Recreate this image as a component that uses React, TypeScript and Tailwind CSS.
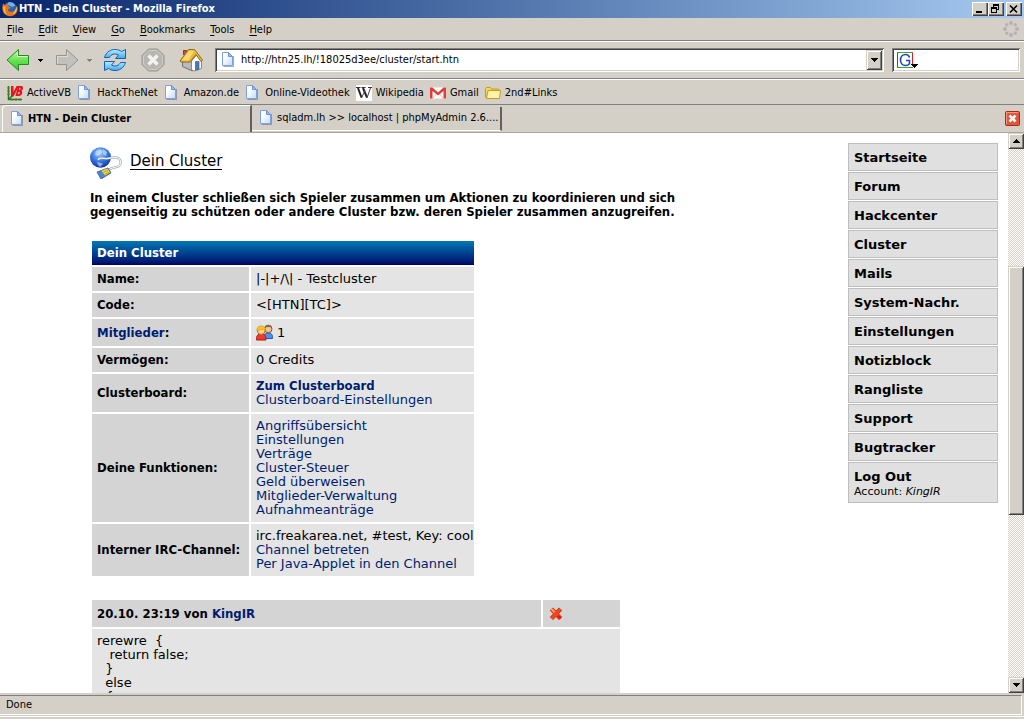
import React from "react";

const raised =
  "bg-[#d4d0c8] shadow-[inset_1px_1px_0_#d4d0c8,inset_-1px_-1px_0_#404040,inset_2px_2px_0_#fff,inset_-2px_-2px_0_#808080]";
const caption =
  "bg-[#d4d0c8] shadow-[inset_1px_1px_0_#fff,inset_-1px_-1px_0_#404040,inset_-2px_-2px_0_#808080]";
const sunken =
  "bg-white shadow-[inset_1px_1px_0_#808080,inset_-1px_-1px_0_#fff,inset_2px_2px_0_#404040,inset_-2px_-2px_0_#d4d0c8]";

function Triangle({ up = false }: { up?: boolean }) {
  return (
    <svg width="7" height="4" viewBox="0 0 7 4" shapeRendering="crispEdges" className="shrink-0">
      <path d={up ? "M3 0h1v1h1v1h1v1h1v1H0V3h1V2h1V1h1z" : "M0 0h7v1H6v1H5v1H4v1H3V3H2V2H1V1H0z"} />
    </svg>
  );
}

function SmallTriangle({ light = false }: { light?: boolean }) {
  return (
    <svg width="5" height="3" viewBox="0 0 5 3" shapeRendering="crispEdges" className="shrink-0">
      <path d="M0 0h5v1H4v1H3v1H2V2H1V1H0z" fill={light ? "#808080" : "#000"} />
    </svg>
  );
}

function PageIcon() {
  return (
    <svg width="16" height="16" viewBox="1 1 16 16" className="shrink-0">
      <defs>
        <linearGradient id="page" x1="0" y1="0" x2="1" y2="1">
          <stop offset=".3" stopColor="#fff" />
          <stop offset="1" stopColor="#c0dcfb" />
        </linearGradient>
      </defs>
      <path d="M3.500 15.500h10V5" fill="none" stroke="#5c6580" strokeOpacity=".55" />
      <path d="M2.500 1.500h6l4 4v9h-10z" fill="url(#page)" stroke="#7da1e6" />
      <path d="M8.500 1.500v4h4z" fill="#9dbcf2" stroke="#6b8fdc" />
    </svg>
  );
}

function FirefoxIcon() {
  return (
    <svg width="16" height="16" viewBox="0 0 16 16" className="shrink-0">
      <circle cx="8" cy="7.500" r="6.500" fill="#2b62b8" />
      <path d="M6 1.500c3-1 6 0 7.500 3L10 6 6 4z" fill="#6fb2ea" />
      <path d="M1.200 2.500C-.5 7 .2 11.500 4 14c4 2.500 9 1 11-3 1-2.500.8-5-.2-7 0 3-1 6-4.300 6.800C7.500 11.500 5.800 9.800 6 8.300l2-.8.6-1.300-2-.7C5.800 4.500 5.500 3 6 2 4.800 2.300 4 3.200 3.700 4 2.800 4 2 3.500 1.200 2.500z" fill="#e8731a" />
      <path d="M1.500 5c-1 4 .5 8 4 9.200C3.500 12 3 9 3.500 6z" fill="#f9b234" />
      <path d="M14.500 5c1 4-1 7.500-4 8.500 2-2 3.500-5 4-8.500z" fill="#fbd65a" />
    </svg>
  );
}

function ArrowIcon({ back = false }: { back?: boolean }) {
  return back ? (
    <svg width="24" height="24" viewBox="0 0 24 24" className="shrink-0">
      <defs>
        <linearGradient id="green" x1="0" y1="0" x2="0" y2="1">
          <stop offset="0" stopColor="#c5f7ae" />
          <stop offset=".55" stopColor="#62e34d" />
          <stop offset="1" stopColor="#3fbf35" />
        </linearGradient>
      </defs>
      <path d="M12.500 1.500v6h10v9h-10v6L1 12z" fill="url(#green)" stroke="#238a25" strokeLinejoin="round" />
      <path d="M11.500 4.500v4h10" fill="none" stroke="#e3fcd8" />
    </svg>
  ) : (
    <svg width="24" height="24" viewBox="0 0 24 24" className="shrink-0">
      <path d="M11.500 1.500v6h-10v9h10v6L23 12z" fill="#c3c1bc" stroke="#96948f" strokeLinejoin="round" />
      <path d="M2.500 15.500v-7h10v-4" fill="none" stroke="#dedcd8" />
    </svg>
  );
}

function ReloadIcon() {
  return (
    <svg width="24" height="24" viewBox="0 0 24 24" className="shrink-0">
      <defs>
        <linearGradient id="blue" x1="0" y1="0" x2="0" y2="1">
          <stop offset="0" stopColor="#b9ecff" />
          <stop offset="1" stopColor="#3fa9ee" />
        </linearGradient>
      </defs>
      <path d="M1.500 9.500C3 4 8 1 13 1.500c2 .2 4 .8 5.500 2l4-2v9h-10L15.500 7C11.500 4.800 8 6.500 6.500 9.500z" fill="url(#blue)" stroke="#1561b6" strokeLinejoin="round" />
      <path d="M22.500 14.500C21 20 16 23 11 22.500c-2-.2-4-.8-5.500-2l-4 2v-9h10L8.500 17c4 2.200 7.500.5 9-2.500z" fill="url(#blue)" stroke="#1561b6" strokeLinejoin="round" />
    </svg>
  );
}

function StopIcon() {
  return (
    <svg width="24" height="24" viewBox="0 0 24 24" className="shrink-0">
      <path d="M7.500 1h9L23 7.500v9L16.500 23h-9L1 16.500v-9z" fill="#b8b6b2" stroke="#979591" />
      <path d="M8 2.500h8L21.500 8v8L16 21.500H8L2.500 16V8z" fill="none" stroke="#cfcdc9" />
      <path d="M7.500 7.500l9 9m0-9l-9 9" stroke="#f4f3f1" strokeWidth="3.500" />
    </svg>
  );
}

function HomeIcon() {
  return (
    <svg width="24" height="24" viewBox="0 0 24 24" className="shrink-0">
      <path d="M3.500 12l7-3 3 3v11l-10-4.500z" fill="#b9b9bd" stroke="#6e6e74" />
      <path d="M12.500 13l5-6 5 6v7.500l-7 2.500-3-1z" fill="#fcfcfc" stroke="#88888c" />
      <path d="M16.500 13.500h3.500V21l-3.500 1.200z" fill="#4a78b5" stroke="#264d83" strokeWidth=".6" />
      <path d="M4.500 2.500h3v4h-3z" fill="#d5483b" stroke="#7c3931" />
      <path d="M1 13L9.500 1.500h6L23.500 12 22 13.500 16.800 6.500 11 14H2z" fill="#eebb38" stroke="#8f6a17" strokeLinejoin="round" />
      <path d="M3 12L10 2.700h5L9.500 12.500z" fill="#fada70" />
    </svg>
  );
}

function ThrobberIcon() {
  return (
    <svg width="16" height="16" viewBox="0 0 16 16" className="shrink-0" fill="#b4b3b1">
      <circle cx="8" cy="2" r="2" />
      <circle cx="12.300" cy="3.800" r="1.700" />
      <circle cx="14" cy="8" r="2" />
      <circle cx="12.300" cy="12.200" r="1.700" />
      <circle cx="8" cy="14" r="2" />
      <circle cx="3.700" cy="12.200" r="1.700" />
      <circle cx="2" cy="8" r="2" />
      <circle cx="3.700" cy="3.800" r="1.700" />
    </svg>
  );
}

function VbIcon() {
  return (
    <svg width="16" height="16" viewBox="0 0 16 16" className="shrink-0">
      <path d="M1.500 1v13.500H15M1.500 14.500L6 10" fill="none" stroke="#1d7a1d" strokeWidth="1.500" />
      <path d="M0 3h3M0 6h3M0 9h3M5 13v3M9 13v3M13 13v3" stroke="#7a7a1d" />
      <path d="M4 1h2.500v6L9.500 1H12L6.500 11.500H4z" fill="#e8141c" />
      <path fillRule="evenodd" d="M11 1h3.500c2 0 2 3.500 0 4.800 1.500 1 .8 5.200-2.300 5.200H8.500zm1.300 1.800L12 5c1.800 0 2.300-2.200.3-2.200zM11.400 7L11 9.300c2 0 2.500-2.300.4-2.300z" fill="#e8141c" />
    </svg>
  );
}

function WikipediaIcon() {
  return (
    <svg width="16" height="16" viewBox="0 0 16 16" className="shrink-0">
      <path d="M0 0h16v16H0z" fill="#fff" />
      <path d="M2 3l3.500 9.500" fill="none" stroke="#222" strokeWidth="2" />
      <path d="M7 3l4 9.500" fill="none" stroke="#222" strokeWidth="2" />
      <path d="M5.500 13L9 5.500M11 13l3.500-10" fill="none" stroke="#444" />
      <path d="M0 2.500h4.500M5.500 2.500h4M12 2.500h4" stroke="#333" />
    </svg>
  );
}

function GmailIcon() {
  return (
    <svg width="16" height="16" viewBox="0 0 16 16" className="shrink-0">
      <path d="M0 2.500h16v11H0z" fill="#fff" />
      <path d="M3 13l4-4.500M13 13L9 8.500" stroke="#e8b5b0" />
      <path d="M0 2.500h2.500L8 7.500l5.500-5H16v11h-2.500V6L8 10.500 2.500 6v7.500H0z" fill="#e03c38" />
    </svg>
  );
}

function FolderIcon() {
  return (
    <svg width="16" height="16" viewBox="0 0 16 16" className="shrink-0">
      <path d="M.5 12.500v-9l1-1h4l1 1.500h7l.5.500v8z" fill="#f5d75f" stroke="#c39a20" strokeLinejoin="round" />
      <path d="M1.500 13.500l1.500-8h12.500l-1 8z" fill="#fdf3a8" stroke="#c59a22" strokeLinejoin="round" />
    </svg>
  );
}

function GoogleIcon() {
  return (
    <svg width="21" height="17" viewBox="0 0 21 17" className="shrink-0">
      <path d="M0 0h16v16H0z" fill="#fff" />
      <path d="M0 .5h16M0 15.500h16" stroke="#2faa35" />
      <path d="M.5 1v14" stroke="#2452c4" />
      <path d="M15.500 1v11" stroke="#d62020" />
      <path d="M12.500 5.500C12 3.500 10.500 2.500 8.500 2.500c-3 0-5 2.300-5 5.500s2 5.500 5 5.500c2 0 3.500-.8 4-2V8.500H9" fill="none" stroke="#1f47b8" strokeWidth="1.600" />
      <path d="M14 12h7v1h-1v1h-1v1h-1v1h-1v-1h-1v-1h-1v-1h-1z" fill="#000" shapeRendering="crispEdges" />
    </svg>
  );
}

function GlobeIcon() {
  return (
    <svg width="32" height="32" viewBox="0 0 32 32" className="shrink-0">
      <defs>
        <radialGradient id="globe" cx=".45" cy=".3" r=".75">
          <stop offset="0" stopColor="#a9cdf9" />
          <stop offset=".5" stopColor="#3a7be4" />
          <stop offset="1" stopColor="#0b2a91" />
        </radialGradient>
      </defs>
      <ellipse cx="10.500" cy="10.500" rx="10.500" ry="10.200" fill="url(#globe)" />
      <path d="M6 4l4-2 3 2-2 3-4 2-2-1zM13 2l4 3-1 4-3-2zM7 15l4 1 2 1-3 3-2-2z" fill="#d5e9fd" opacity=".6" />
      <path d="M8 13c1-3 4-2 7-1.500 5 .5 9-2.500 13-.5 4 2.500 3.500 7.500-1 9-3 1-6 .5-8 3" fill="none" stroke="#8f9aa5" strokeWidth="2.200" />
      <path d="M8 13c1-3 4-2 7-1.500 5 .5 9-2.500 13-.5 4 2.500 3.500 7.500-1 9-3 1-6 .5-8 3" fill="none" stroke="#f3f5f8" strokeWidth="1.200" />
      <path d="M7 25l11-4 3 5-10 6z" fill="#4f84d0" stroke="#355a96" strokeWidth=".8" />
      <path d="M11.500 24l6-2.500 2.500 4-5 3z" fill="#f6d733" />
      <path d="M13 25.500l5-2M14.500 27.500l5-2.300" stroke="#b89010" strokeWidth=".8" />
    </svg>
  );
}

function MembersIcon() {
  return (
    <svg width="17" height="17" viewBox="0 0 17 17" className="shrink-0">
      <path d="M8 14.500c0-4 1-5.500 4.500-5.500s4 2 4 5.500z" fill="#4a93ee" stroke="#1d57b4" />
      <circle cx="12.300" cy="5" r="3.700" fill="#f3c390" stroke="#80522c" />
      <path d="M8.500 4c0-4.500 7.500-4.500 7.500 0-2-1.500-5-1.500-7.500 0z" fill="#8b6a4c" />
      <path d="M.5 16c0-4.500 1-6 4.800-6s4.700 2 4.700 6z" fill="#ee3a34" stroke="#b41414" />
      <circle cx="5.200" cy="6.500" r="3.900" fill="#fbd19c" stroke="#b9721f" />
      <path d="M1 6.500C.5.500 9.500.500 9.500 6 7 4 4 6.500 1 6.500z" fill="#fbc91c" stroke="#c98b0f" strokeWidth=".6" />
    </svg>
  );
}

function DeleteIcon() {
  return (
    <svg width="16" height="17" viewBox="0 0 16 17" className="shrink-0">
      <path d="M3.500 4l9 9.500m0-9.500l-9 9.500" stroke="#b8402c" strokeWidth="4.600" />
      <path d="M3.500 4l9 9.500" stroke="#fb5b22" strokeWidth="3" />
      <path d="M12.500 4l-9 9.500" stroke="#f4441a" strokeWidth="3" />
      <path d="M3 3.500L6.500 7" stroke="#ffa777" strokeWidth="1.500" />
      <path d="M9.500 10.500l3.200 3.200" stroke="#f51208" strokeWidth="2.500" />
    </svg>
  );
}

function CloseTabIcon() {
  return (
    <svg width="15" height="15" viewBox="0 0 15 15">
      <rect x=".5" y=".5" width="14" height="14" rx="1" fill="#e3553b" stroke="#a8281a" />
      <path d="M1.500 13V1.500H13" fill="none" stroke="#f59a82" />
      <path d="M4.500 4.500l6 6m0-6l-6 6" stroke="#fff" strokeWidth="2.500" />
    </svg>
  );
}

const menus = ["File", "Edit", "View", "Go", "Bookmarks", "Tools", "Help"];

const bookmarks: [string, React.ReactNode][] = [
  ["ActiveVB", <VbIcon />],
  ["HackTheNet", <PageIcon />],
  ["Amazon.de", <PageIcon />],
  ["Online-Videothek", <PageIcon />],
  ["Wikipedia", <WikipediaIcon />],
  ["Gmail", <GmailIcon />],
  ["2nd#Links", <FolderIcon />],
];

const navigation = ["Startseite", "Forum", "Hackcenter", "Cluster", "Mails", "System-Nachr.", "Einstellungen", "Notizblock", "Rangliste", "Support", "Bugtracker"];

const functions = ["Angriffsübersicht", "Einstellungen", "Verträge", "Cluster-Steuer", "Geld überweisen", "Mitglieder-Verwaltung", "Aufnahmeanträge"];

const strong = "font-['DejaVu_Sans_Condensed','Noto_Sans',sans-serif] font-bold";

function Row({ label, children }: { label: React.ReactNode; children: React.ReactNode }) {
  return (
    <tr>
      <th scope="row" className={`w-[157px] bg-[#d4d4d4] p-[5px] text-left ${strong}`}>{label}</th>
      <td className="bg-[#e4e4e4] py-[5px] pl-[5px] whitespace-nowrap">{children}</td>
    </tr>
  );
}

function Link({ children, bold = false }: { children: React.ReactNode; bold?: boolean }) {
  return <a href="#" className={bold ? `text-[#001c70] ${strong}` : "text-[#001c70]"}>{children}</a>;
}

function TitleBar() {
  return (
    <header className="flex h-[18px] shrink-0 items-center bg-linear-to-r from-[#0a246a] to-[#a6caf0] pr-0.5 pl-0.5">
      <FirefoxIcon />
      <h1 className="grow pl-px font-bold text-white">HTN - Dein Cluster - Mozilla Firefox</h1>
      <button aria-label="Minimize" className={`flex h-3.5 w-4 items-center justify-center ${caption}`}>
        <svg width="12" height="10" viewBox="0 0 12 10" shapeRendering="crispEdges"><path d="M2 7h6v2H2z" /></svg>
      </button>
      <button aria-label="Restore" className={`flex h-3.5 w-4 items-center justify-center ${caption}`}>
        <svg width="12" height="10" viewBox="0 0 12 10" shapeRendering="crispEdges"><path d="M3 0h6v6H7V5h1V2H4v1H3zM1 3h6v6H1zm1 2v3h4V5z" fillRule="evenodd" /></svg>
      </button>
      <button aria-label="Close" className={`ml-0.5 flex h-3.5 w-4 items-center justify-center ${caption}`}>
        <svg width="12" height="10" viewBox="0 0 12 10"><path d="M2 1.500l7 7m0-7l-7 7" stroke="#000" strokeWidth="1.600" /></svg>
      </button>
    </header>
  );
}

function Toolbar() {
  return (
    <div className="flex h-[37px] shrink-0 items-center border-b border-[#808080] pr-1 pl-1.5 shadow-[0_1px_0_#fff]">
      <button aria-label="Back" className="flex w-8 items-center"><ArrowIcon back /></button>
      <button aria-label="Back history" className="w-[17px]"><SmallTriangle /></button>
      <button aria-label="Forward" className="flex w-8 items-center"><ArrowIcon /></button>
      <button aria-label="Forward history" className="w-4"><SmallTriangle light /></button>
      <button aria-label="Reload" className="w-[38px]"><ReloadIcon /></button>
      <button aria-label="Stop" className="w-[38px]"><StopIcon /></button>
      <button aria-label="Home" className="w-9"><HomeIcon /></button>
      <div className={`flex h-6 grow items-center p-0.5 pl-1.5 ${sunken}`}>
        <PageIcon />
        <input aria-label="Address" defaultValue="http://htn25.lh/!18025d3ee/cluster/start.htn" className="min-w-0 grow bg-transparent pl-1 outline-none" />
        <button aria-label="Show addresses" className={`flex h-5 w-4 items-center justify-center ${raised}`}><Triangle /></button>
      </div>
      <div className={`ml-2 flex h-6 w-32 items-center p-0.5 pl-[5px] ${sunken}`}>
        <button aria-label="Choose search engine"><GoogleIcon /></button>
        <input aria-label="Search" className="w-0 min-w-0 grow bg-transparent pl-1 outline-none" />
      </div>
    </div>
  );
}

function Tabs() {
  return (
    <div className="flex h-7 shrink-0 items-center border-b border-[#aca899] pl-0.5">
      <button className="flex h-[27px] w-[250px] items-center gap-0.5 rounded-tl-sm border-t border-r-2 border-l border-t-white border-r-[#606060] border-l-white pl-[7px] font-bold">
        <PageIcon />HTN - Dein Cluster
      </button>
      <button className="flex h-6 w-[250px] items-center gap-0.5 border-r-2 border-b border-r-[#606060] border-b-white pl-[7px]">
        <PageIcon />sqladm.lh &gt;&gt; localhost | phpMyAdmin 2.6....
      </button>
      <button aria-label="Close tab" className="mr-1 ml-auto"><CloseTabIcon /></button>
    </div>
  );
}

function Scrollbar() {
  return (
    <div className="flex w-4 shrink-0 flex-col bg-[repeating-conic-gradient(#fff_0_25%,#d4d0c8_0_50%)] bg-size-[2px_2px]">
      <button aria-label="Scroll up" className={`flex h-4 items-center justify-center ${raised}`}><Triangle up /></button>
      <div className="flex-[117]" />
      <div className={`flex-[249] ${raised}`} />
      <div className="flex-[162]" />
      <button aria-label="Scroll down" className={`flex h-4 items-center justify-center ${raised}`}><Triangle /></button>
    </div>
  );
}

function Page() {
  return (
    <div className="flex min-h-0 grow bg-white">
      <div className="flex min-w-0 grow items-start justify-between overflow-hidden pr-2.5 pl-[90px] font-['DejaVu_Sans','Verdana',sans-serif] text-[13px] leading-[14px]">
        <main className="w-[600px] pt-3.5">
          <h2 className="flex items-center gap-2 pb-3 text-[15px]">
            <GlobeIcon />
            <span className="mb-1 border-b border-black leading-4">Dein Cluster</span>
          </h2>
          <p className={`whitespace-nowrap ${strong}`}>
            In einem Cluster schließen sich Spieler zusammen um Aktionen zu koordinieren und sich<br />
            gegenseitig zu schützen oder andere Cluster bzw. deren Spieler zusammen anzugreifen.
          </p>
          <table className="mt-5 w-[386px] table-fixed border-separate border-spacing-0.5">
            <colgroup>
              <col className="w-[157px]" />
              <col />
            </colgroup>
            <thead>
              <tr>
                <th colSpan={2} className={`bg-linear-to-b from-[#0078b4] to-[#000068] p-[5px] text-left text-white ${strong}`}>Dein Cluster</th>
              </tr>
            </thead>
            <tbody>
              <Row label="Name:">|-|+/\| - Testcluster</Row>
              <Row label="Code:">&lt;[HTN][TC]&gt;</Row>
              <Row label={<><Link bold>Mitglieder</Link>:</>}>
                <span className="flex items-center gap-1"><MembersIcon />1</span>
              </Row>
              <Row label="Vermögen:">0 Credits</Row>
              <Row label="Clusterboard:">
                <Link bold>Zum Clusterboard</Link><br />
                <Link>Clusterboard-Einstellungen</Link>
              </Row>
              <Row label="Deine Funktionen:">
                <ul>{functions.map((name) => <li key={name}><Link>{name}</Link></li>)}</ul>
              </Row>
              <Row label="Interner IRC-Channel:">
                irc.freakarea.net, #test, Key: cool<br />
                <Link>Channel betreten</Link><br />
                <Link>Per Java-Applet in den Channel</Link>
              </Row>
            </tbody>
          </table>
          <table className="mt-5 w-[532px] border-separate border-spacing-0.5">
            <thead>
              <tr>
                <th className={`bg-[#d4d4d4] p-[5px] text-left ${strong}`}>20.10. 23:19 von <Link bold>KingIR</Link></th>
                <th className="w-[77px] bg-[#d4d4d4] p-[5px]"><button aria-label="Löschen" className="block"><DeleteIcon /></button></th>
              </tr>
            </thead>
            <tbody>
              <tr>
                <td colSpan={2} className="bg-[#e4e4e4] p-[5px] whitespace-pre">
                  {"rerewre  {\n   return false;\n  }\n  else\n  {"}
                </td>
              </tr>
            </tbody>
          </table>
        </main>
        <nav className="mt-2.5 flex w-[150px] shrink-0 flex-col gap-px leading-4 font-bold">
          {navigation.map((name) => (
            <a key={name} href="#" className="h-7 border border-[#bebebe] bg-[#e0e0e0] px-[5px] py-1.5 leading-4">{name}</a>
          ))}
          <div className="border border-[#bebebe] bg-[#e0e0e0] px-[5px] pt-1.5 pb-1">
            <a href="#" className="block">Log Out</a>
            <p className="text-[11px] leading-[13px] font-normal">Account: <i>KingIR</i></p>
          </div>
        </nav>
      </div>
      <Scrollbar />
    </div>
  );
}

export default function App() {
  return (
    <div className="flex h-screen flex-col overflow-hidden bg-[#d4d0c8] font-['DejaVu_Sans_Condensed','Noto_Sans',sans-serif] text-[11px] leading-[14px] text-black">
      <TitleBar />
      <div className="flex h-[23px] shrink-0 items-center justify-between border-b border-[#808080] pr-[5px] pl-[7px]">
        <div className="flex gap-[15px] pt-0.5">
          {menus.map((name) => <button key={name}><u className="underline-offset-2">{name[0]}</u>{name.slice(1)}</button>)}
        </div>
        <ThrobberIcon />
      </div>
      <div className="h-px shrink-0 bg-white" />
      <Toolbar />
      <nav className="flex h-[26px] shrink-0 items-center gap-1.5 border-b border-[#808080] pt-0.5 pl-[7px]">
        {bookmarks.map(([name, icon]) => (
          <a key={name} href="#" className="flex items-center gap-1">{icon}{name}</a>
        ))}
      </nav>
      <Tabs />
      <Page />
      <footer className="flex h-[26px] shrink-0 flex-col pt-0.5">
        <div className="mr-0.5 h-5 border-t border-r border-b border-[#808080] border-r-white border-b-white pl-1.5 leading-[18px]">Done</div>
        <div className="mt-px h-px bg-white" />
      </footer>
    </div>
  );
}
